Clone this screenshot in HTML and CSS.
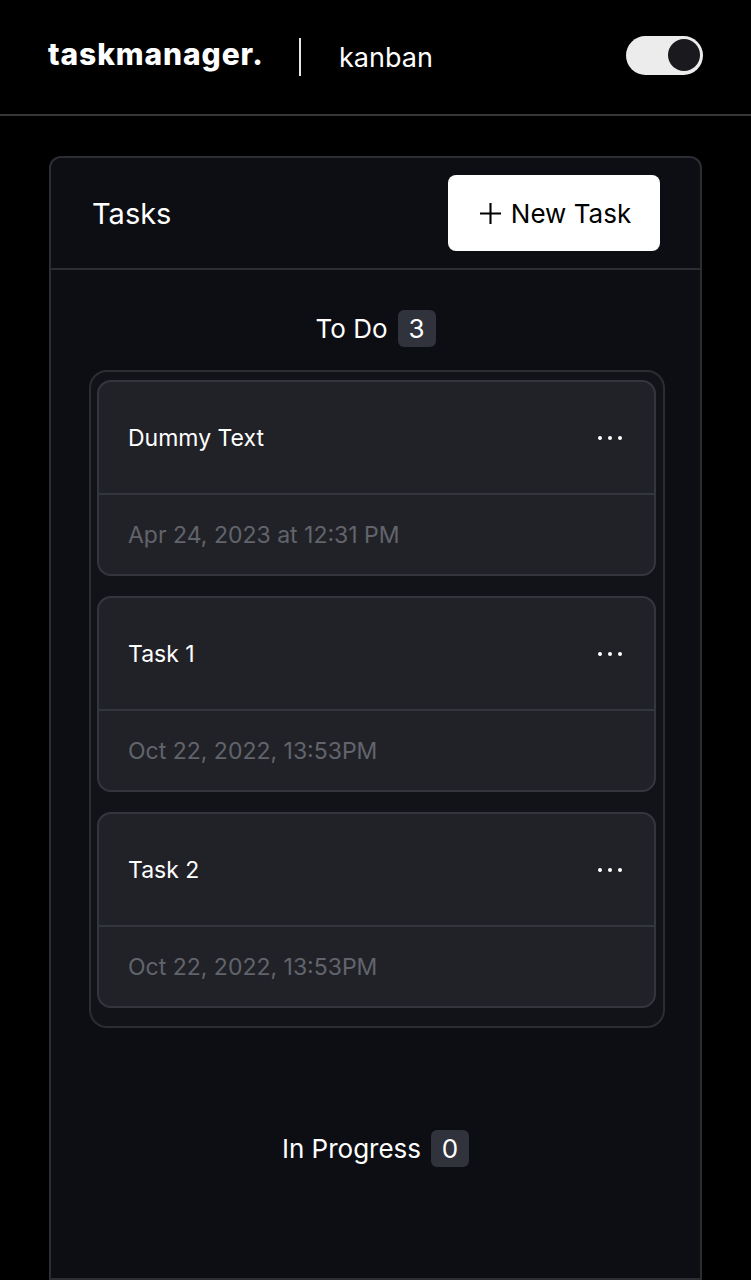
FILE: index.html
```html
<!DOCTYPE html>
<html lang="en">
<head>
<meta charset="utf-8">
<title>taskmanager. kanban</title>
<link rel="stylesheet" href="styles.css">
</head>
<body>
<header class="topbar">
  <div class="brand">
    <span class="logo">taskmanager.</span>
    <span class="divider"></span>
    <span class="section">kanban</span>
  </div>
  <div class="toggle"><span class="knob"></span></div>
</header>
<main class="main">
  <section class="panel">
    <div class="panel-head">
      <h1 class="panel-title">Tasks</h1>
      <button class="new-btn"><svg class="plus" viewBox="0 0 24 24" width="24" height="24"><path d="M12 1v22M1 12h22" stroke="#000" stroke-width="2.2" fill="none"/></svg>New Task</button>
    </div>
    <div class="column">
      <div class="col-title">To Do <span class="badge">3</span></div>
      <div class="list">
        <article class="card">
          <div class="card-top"><span class="card-name">Dummy Text</span><span class="dots"><i></i><i></i><i></i></span></div>
          <div class="card-bottom">Apr 24, 2023 at 12:31 PM</div>
        </article>
        <article class="card">
          <div class="card-top"><span class="card-name">Task 1</span><span class="dots"><i></i><i></i><i></i></span></div>
          <div class="card-bottom">Oct 22, 2022, 13:53PM</div>
        </article>
        <article class="card">
          <div class="card-top"><span class="card-name">Task 2</span><span class="dots"><i></i><i></i><i></i></span></div>
          <div class="card-bottom">Oct 22, 2022, 13:53PM</div>
        </article>
      </div>
    </div>
    <div class="column progress">
      <div class="col-title">In Progress <span class="badge">0</span></div>
    </div>
  </section>
</main>
</body>
</html>
```
FILE: styles.css
```css
* { box-sizing: border-box; }
html, body { margin: 0; padding: 0; }
body {
  background: #000;
  color: #fff;
  font-family: "Inter", "Roboto", sans-serif;
  height: 1280px;
  overflow: hidden;
}
.topbar {
  height: 116px;
  border-bottom: 2px solid #363636;
  display: flex;
  align-items: center;
  justify-content: space-between;
  padding: 0 48px 0 48px;
}
.brand { display: flex; align-items: center; }
.logo {
  font-family: "Inter", sans-serif;
  font-weight: 800;
  font-size: 30px;
  letter-spacing: 0.9px;
  color: #fff;
  margin-top: -6px;
  width: 212px;
  white-space: nowrap;
}
.divider {
  width: 2px;
  height: 38px;
  background: #e6e6e6;
  margin: 0 38px 0 39px;
}
.section {
  font-size: 27px;
  font-weight: 400;
  color: #fff;
}
.toggle {
  width: 77px;
  height: 39px;
  border-radius: 20px;
  background: #ececec;
  display: flex;
  align-items: center;
  justify-content: flex-end;
  padding-right: 3px;
  margin-top: -4px;
}
.knob {
  width: 32px;
  height: 32px;
  border-radius: 50%;
  background: #19191e;
}
.main {
  padding: 40px 49px 0 49px;
}
.panel {
  width: 653px;
  height: 1124px;
  overflow: hidden;
  border: 2px solid #2b2d33;
  border-radius: 12px 12px 0 0;
  background: #0d0e13;
}
.panel-head {
  height: 112px;
  border-bottom: 2px solid #2b2d33;
  display: flex;
  align-items: center;
  justify-content: space-between;
  padding: 0 40px 0 41px;
}
.panel-title {
  margin: 0;
  font-size: 29px;
  font-weight: 400;
  color: #fff;
}
.new-btn {
  width: 212px;
  height: 76px;
  border: none;
  border-radius: 8px;
  background: #fff;
  color: #000;
  font-family: "Inter", sans-serif;
  font-size: 26px;
  font-weight: 400;
  display: flex;
  align-items: center;
  justify-content: center;
  gap: 9px;
  padding: 0 0 0 2px;
}
.plus { width: 23px; height: 23px; }
.column {
  display: flex;
  flex-direction: column;
  align-items: center;
  padding-top: 40px;
}
.col-title {
  display: flex;
  align-items: center;
  gap: 10px;
  font-size: 26px;
  font-weight: 400;
  height: 37px;
}
.badge {
  display: inline-flex;
  align-items: center;
  justify-content: center;
  min-width: 38px;
  height: 37px;
  padding: 0 8px;
  border-radius: 6px;
  background: #30333b;
  font-size: 26px;
}
.list {
  align-self: stretch;
  margin: 23px 35px 0 38px;
  border: 2px solid #2b2d33;
  border-radius: 18px;
  background: #121318;
  padding: 8px 7px 18px 6px;
  display: flex;
  flex-direction: column;
  gap: 20px;
}
.card {
  border: 2px solid #34363d;
  border-radius: 14px;
  background: #212228;
}
.card-top {
  height: 113px;
  border-bottom: 2px solid #34363d;
  display: flex;
  align-items: center;
  justify-content: space-between;
  padding: 0 32px 0 29px;
}
.card-name {
  font-size: 23px;
  font-weight: 400;
  color: #fff;
}
.dots { display: flex; gap: 6px; }
.dots i {
  display: block;
  width: 4px;
  height: 4px;
  border-radius: 50%;
  background: #fff;
}
.card-bottom {
  height: 79px;
  display: flex;
  align-items: center;
  padding-left: 29px;
  font-size: 23px;
  color: #62646b;
}
.progress { padding-top: 102px; }
```
